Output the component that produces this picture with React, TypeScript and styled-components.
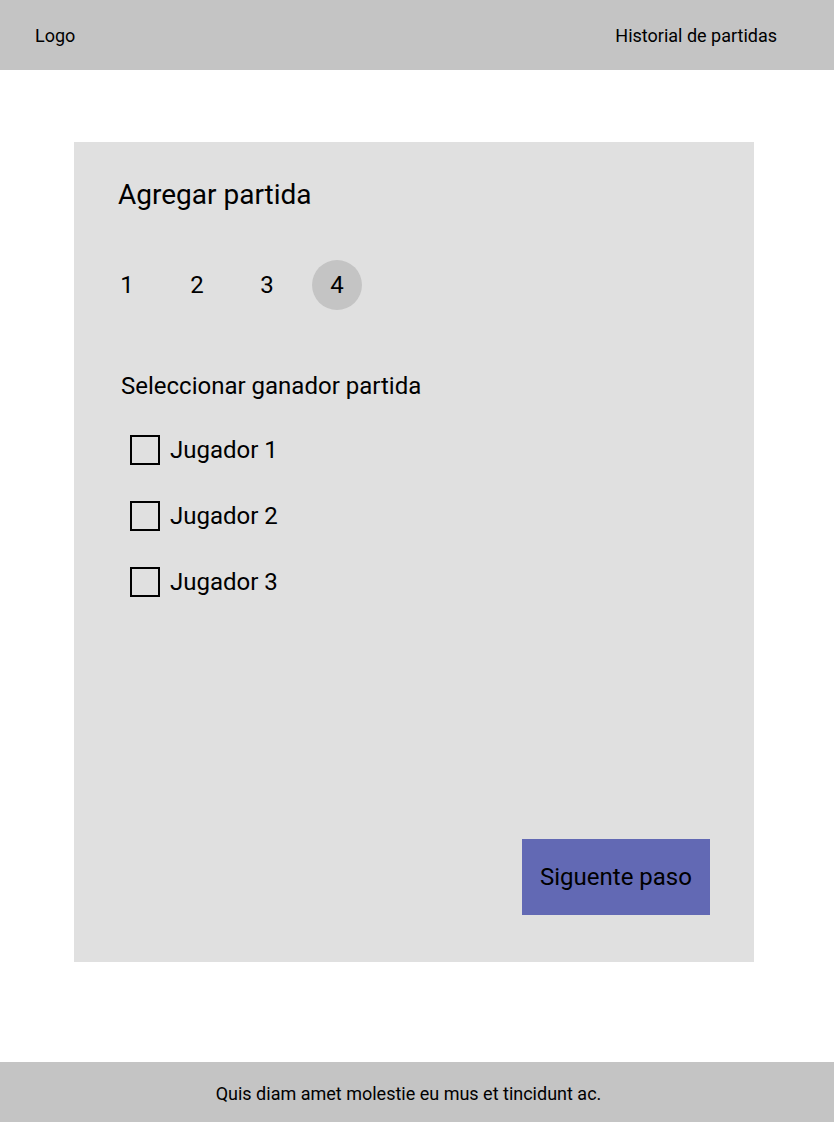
import styled, { createGlobalStyle } from 'styled-components';
import { useState } from 'react';

const GlobalStyle = createGlobalStyle`
	* {
		box-sizing: border-box;
	}

	body {
		margin: 0;
		font-family: Roboto, 'Liberation Sans', sans-serif;
		color: #000;
		background: #fff;
	}
`;

const Page = styled.div`
	min-height: 100vh;
	display: flex;
	flex-direction: column;
`;

const Header = styled.header`
	height: 70px;
	background: #c4c4c4;
	display: flex;
	align-items: center;
	justify-content: space-between;
	padding: 0 57px 0 35px;
	font-size: 18px;
`;

const NavLink = styled.a`
	color: inherit;
	text-decoration: none;
	cursor: pointer;
`;

const Main = styled.main`
	flex: 1;
	display: flex;
	padding: 72px 0 100px 74px;
`;

const Card = styled.section`
	width: 680px;
	height: 820px;
	background: #e0e0e0;
	padding: 36px 44px 47px;
	display: flex;
	flex-direction: column;
`;

const Title = styled.h1`
	margin: 0;
	font-size: 28px;
	font-weight: 400;
	line-height: 34px;
`;

const Steps = styled.ol`
	list-style: none;
	margin: 48px 0 0 -16px;
	padding: 0;
	display: flex;
	gap: 20px;
`;

const Step = styled.li<{ $active: boolean }>`
	width: 50px;
	height: 50px;
	border-radius: 50%;
	display: flex;
	align-items: center;
	justify-content: center;
	font-size: 24px;
	background: ${(props) => (props.$active ? '#c4c4c4' : 'transparent')};
`;

const SectionLabel = styled.h2`
	margin: 62px 0 0 3px;
	font-size: 24px;
	font-weight: 400;
	line-height: 28px;
`;

const Options = styled.div`
	margin: 35px 0 0 12px;
	display: flex;
	flex-direction: column;
	gap: 36px;
`;

const Option = styled.label`
	display: flex;
	align-items: center;
	gap: 10px;
	height: 30px;
	font-size: 24px;
	cursor: pointer;
`;

const Box = styled.span<{ $checked: boolean }>`
	width: 30px;
	height: 30px;
	border: 2px solid #000;
	background: ${(props) => (props.$checked ? '#6269b4' : 'transparent')};
`;

const HiddenInput = styled.input`
	display: none;
`;

const Actions = styled.div`
	margin-top: auto;
	display: flex;
	justify-content: flex-end;
`;

const NextButton = styled.button`
	width: 188px;
	height: 76px;
	border: none;
	background: #6269b4;
	font-family: inherit;
	font-size: 24px;
	color: #000;
	cursor: pointer;
`;

const Footer = styled.footer`
	height: 60px;
	background: #c4c4c4;
	display: flex;
	align-items: center;
	justify-content: center;
	padding: 3px 17px 0 0;
	font-size: 18px;
`;

const players = ['Jugador 1', 'Jugador 2', 'Jugador 3'];

const App = () => {
	const [winner, setWinner] = useState<string | null>(null);
	const currentStep = 4;

	return (
		<>
			<GlobalStyle />
			<Page>
				<Header>
					<NavLink>Logo</NavLink>
					<NavLink>Historial de partidas</NavLink>
				</Header>
				<Main>
					<Card>
						<Title>Agregar partida</Title>
						<Steps>
							{[1, 2, 3, 4].map((step) => (
								<Step key={step} $active={step === currentStep}>
									{step}
								</Step>
							))}
						</Steps>
						<SectionLabel>Seleccionar ganador partida</SectionLabel>
						<Options>
							{players.map((player) => (
								<Option key={player}>
									<HiddenInput
										type="checkbox"
										checked={winner === player}
										onChange={() =>
											setWinner(winner === player ? null : player)
										}
									/>
									<Box $checked={winner === player} />
									{player}
								</Option>
							))}
						</Options>
						<Actions>
							<NextButton>Siguente paso</NextButton>
						</Actions>
					</Card>
				</Main>
				<Footer>Quis diam amet molestie eu mus et tincidunt ac.</Footer>
			</Page>
		</>
	);
};

export default App;
